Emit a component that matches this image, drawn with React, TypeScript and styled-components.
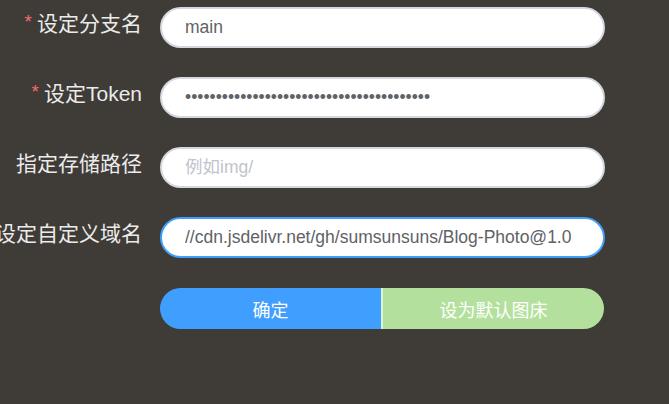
import React, { FC } from 'react'
import styled, { createGlobalStyle } from 'styled-components'

const GlobalStyle = createGlobalStyle`
    html, body {
        margin: 0;
        padding: 0;
        background: #3f3b36;
        font-family: "Liberation Sans", "Noto Sans CJK SC", sans-serif;
    }
    #root {
        min-height: 404px;
    }
`

const App: FC = () => {
  return (
    <>
      <GlobalStyle />
      <Form>
        <Row>
          <Label required>设定分支名</Label>
          <Input defaultValue="main" />
        </Row>
        <Row>
          <Label required>设定Token</Label>
          <Input type="password" defaultValue={'x'.repeat(40)} />
        </Row>
        <Row>
          <Label>指定存储路径</Label>
          <Input placeholder="例如img/" />
        </Row>
        <Row>
          <Label>设定自定义域名</Label>
          <Input focused defaultValue="//cdn.jsdelivr.net/gh/sumsunsuns/Blog-Photo@1.0" />
        </Row>
        <ButtonRow>
          <Spacer />
          <ButtonGroup>
            <Button kind="primary">确定</Button>
            <Button kind="success">设为默认图床</Button>
          </ButtonGroup>
        </ButtonRow>
      </Form>
    </>
  )
}

const Label: FC<{ required?: boolean; children: React.ReactNode }> = ({ required, children }) => (
  <LabelBox>
    {required && <Star>*</Star>}
    <span>{children}</span>
  </LabelBox>
)

const Form = styled.div`
    display: flex;
    flex-direction: column;
    gap: 29px;
    padding-top: 7px;
`
const Row = styled.div`
    display: flex;
    align-items: flex-start;
    gap: 18px;
`
const ButtonRow = styled(Row)`
    margin-top: 1px;
`
const LabelBox = styled.label`
    width: 142px;
    flex-shrink: 0;
    display: flex;
    justify-content: flex-end;
    align-items: flex-start;
    white-space: nowrap;
    font-size: 21px;
    line-height: 34px;
    color: #ebebeb;
`
const Star = styled.span`
    color: #f56c6c;
    margin-right: 5px;
    font-size: 19px;
    line-height: 30px;
`
const Spacer = styled.div`
    width: 142px;
    flex-shrink: 0;
`
const Input = styled.input<{ focused?: boolean }>`
    box-sizing: border-box;
    width: 445px;
    height: 41px;
    padding: 0 20px 0 23px;
    border: 2px solid ${p => (p.focused ? '#409eff' : '#d4d7de')};
    border-radius: 21px;
    background: #fff;
    outline: none;
    font-family: "Liberation Sans", "Noto Sans CJK SC", sans-serif;
    font-size: 17.5px;
    color: #606266;
    &::placeholder {
        color: #c0c4cc;
    }
`
const ButtonGroup = styled.div`
    display: flex;
    width: 444px;
    height: 41px;
    border-radius: 21px;
    overflow: hidden;
`
const Button = styled.button<{ kind: 'primary' | 'success' }>`
    flex: 1;
    border: none;
    margin: 0;
    padding: 0;
    color: #fff;
    font-family: "Liberation Sans", "Noto Sans CJK SC", sans-serif;
    font-size: 18px;
    background: ${p => (p.kind === 'primary' ? '#409eff' : '#b3e19d')};
    border-left: ${p => (p.kind === 'success' ? '2px solid rgba(255,255,255,0.55)' : 'none')};
`

export default App
